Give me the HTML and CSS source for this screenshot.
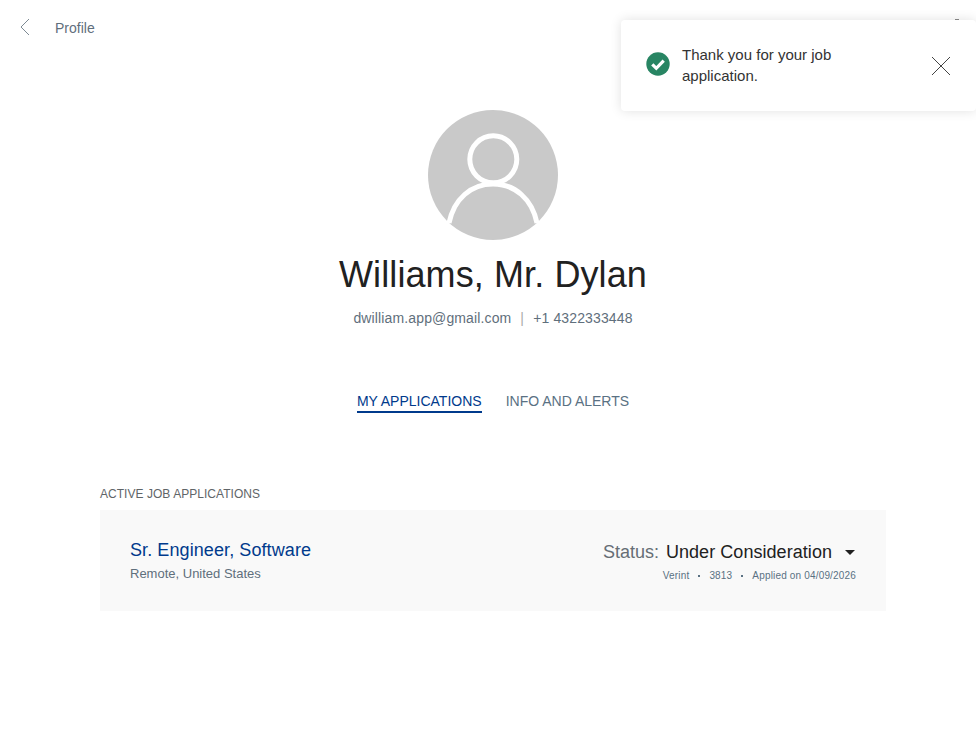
FILE: index.html
```html
<!DOCTYPE html>
<html lang="en">
<head>
<meta charset="utf-8">
<title>Profile</title>
<link rel="stylesheet" href="styles.css">
</head>
<body>
<header class="topbar">
  <a class="back" href="#" aria-label="Back">
    <svg class="back-icon" width="10" height="18" viewBox="0 0 10 18"><path d="M9 1 1 9l8 8" fill="none" stroke="#7d8a94" stroke-width="1"/></svg>
  </a>
  <span class="page-title">Profile</span>
  <span class="speck"></span>
</header>

<aside class="toast">
  <svg class="toast-icon" width="24" height="24" viewBox="0 0 24 24"><circle cx="12" cy="12" r="11.700" fill="#288563"/><path d="M6.300 12.300l4 4 7.400-7.600" fill="none" stroke="#fff" stroke-width="3.200"/></svg>
  <p class="toast-text">Thank you for your job application.</p>
  <svg class="toast-close" width="20" height="20" viewBox="0 0 20 20"><path d="M1 1l18 18M19 1 1 19" fill="none" stroke="#444" stroke-width="1"/></svg>
</aside>

<main class="profile">
  <svg class="avatar" width="130" height="130" viewBox="0 0 130 130">
    <circle cx="65" cy="65" r="65" fill="#c9c9c9"/>
    <circle cx="65.300" cy="49.300" r="23.500" fill="none" stroke="#fff" stroke-width="5"/>
    <path d="M21 113C26 89 43 74 65 74S104 89 109 113" fill="none" stroke="#fff" stroke-width="5"/>
  </svg>
  <h1 class="name">Williams, Mr. Dylan</h1>
  <p class="contact">dwilliam.app@gmail.com<span class="sep">|</span>+1 4322333448</p>
  <nav class="tabs">
    <a class="tab tab-active" href="#">MY APPLICATIONS</a>
    <a class="tab" href="#">INFO AND ALERTS</a>
  </nav>
  <section class="applications">
    <h2 class="section-title">ACTIVE JOB APPLICATIONS</h2>
    <article class="card">
      <div class="job">
        <a class="job-title" href="#">Sr. Engineer, Software</a>
        <div class="job-location">Remote, United States</div>
      </div>
      <div class="status-block">
        <div class="status">
          <span class="status-label">Status:</span>
          <span class="status-value">Under Consideration</span>
          <span class="caret"></span>
        </div>
        <div class="meta">
          <span>Verint</span><span class="dot"></span><span>3813</span><span class="dot"></span><span>Applied on 04/09/2026</span>
        </div>
      </div>
    </article>
  </section>
</main>
</body>
</html>
```
FILE: styles.css
```css
* { box-sizing: border-box; }
html, body { margin: 0; padding: 0; }
body {
  width: 976px;
  height: 731px;
  overflow: hidden;
  position: relative;
  background: #fff;
  font-family: "Liberation Sans", Arial, sans-serif;
  color: #212529;
}
a { text-decoration: none; }

.topbar {
  display: flex;
  align-items: center;
  height: 56px;
  padding-left: 20px;
}
.back { display: flex; width: 35px; margin-bottom: 2px; }
.back-icon { display: block; }
.page-title { font-size: 14px; color: #5f6f7c; }
.speck {
  position: absolute;
  left: 955px;
  top: 19px;
  width: 4px;
  height: 2px;
  background: #8a8a8a;
}

.toast {
  position: absolute;
  left: 621px;
  top: 20px;
  width: 355px;
  height: 91px;
  display: flex;
  align-items: center;
  padding-left: 25px;
  background: #fff;
  border-radius: 4px;
  box-shadow: 0 0 12px rgba(0, 0, 0, 0.12);
}
.toast-icon { flex: none; margin-bottom: 4px; }
.toast-text {
  width: 190px;
  margin: 0 0 2px 12px;
  font-size: 15px;
  line-height: 21px;
  color: #333;
}
.toast-close { flex: none; margin-left: 59px; }

.profile {
  display: flex;
  flex-direction: column;
  align-items: center;
  padding-top: 54px;
  padding-left: 10px;
}
.avatar { display: block; }
.name {
  margin: 13px 0 0;
  font-size: 36px;
  line-height: 44px;
  font-weight: 400;
  letter-spacing: 0.1px;
  color: #212121;
}
.contact {
  margin: 11px 0 0;
  font-size: 14px;
  line-height: 20px;
  letter-spacing: 0.13px;
  color: #5f6f7c;
}
.sep { margin: 0 9px; color: #aaa; }

.tabs {
  display: flex;
  gap: 24px;
  margin-top: 63px;
}
.tab {
  display: block;
  font-size: 14px;
  line-height: 20px;
  color: #5a7183;
  border-bottom: 2px solid transparent;
}
.tab-active { color: #003a8c; border-bottom-color: #003a8c; }

.applications {
  width: 786px;
  margin-top: 73px;
}
.section-title {
  margin: 0 0 7px;
  font-size: 12px;
  line-height: 17px;
  font-weight: 400;
  letter-spacing: 0.04px;
  color: #5f6568;
}
.card {
  display: flex;
  justify-content: space-between;
  height: 101px;
  padding: 29px 30px 0;
  background: #f9f9f9;
}
.job-title {
  display: block;
  font-size: 18px;
  line-height: 22px;
  letter-spacing: 0.09px;
  color: #003a8c;
}
.job-location {
  margin-top: 4px;
  font-size: 13px;
  line-height: 18px;
  color: #5f6f7c;
}
.status-block { display: flex; flex-direction: column; align-items: flex-end; }
.status { display: flex; align-items: center; height: 26px; }
.status-label { font-size: 18px; color: #666e75; }
.status-value { margin-left: 7px; font-size: 18px; letter-spacing: 0.05px; color: #212121; }
.caret {
  margin: 0 1px 0 13px;
  border-left: 5px solid transparent;
  border-right: 5px solid transparent;
  border-top: 5px solid #212121;
}
.meta {
  display: flex;
  align-items: center;
  margin-top: 4px;
  font-size: 10px;
  line-height: 13px;
  letter-spacing: 0.17px;
  color: #5a7183;
}
.dot {
  width: 2px;
  height: 2px;
  margin: 0 9px;
  background: #5a7183;
}
```
